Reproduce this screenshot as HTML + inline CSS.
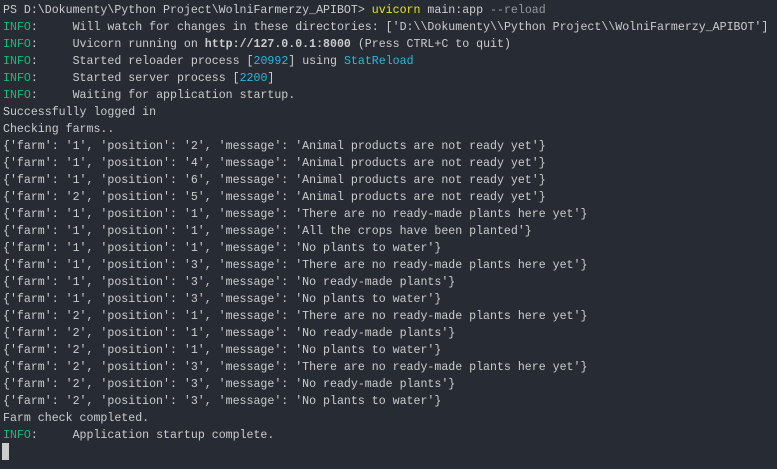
<!DOCTYPE html>
<html><head><meta charset="utf-8"><style>
html,body{margin:0;padding:0;background:#272b33;width:777px;height:469px;overflow:hidden}
pre{margin:0;padding:2px 0 0 3px;font-family:"Liberation Mono",monospace;font-size:11.6px;line-height:17px;color:#cccccc;white-space:pre}
.g{color:#0dbc79}.c{color:#29b8db}.y{color:#e5e510}.d{color:#999999}
.cur{position:absolute;left:2px;top:443px;width:7px;height:17px;background:#cccccc}
</style></head><body><pre>PS D:\Dokumenty\Python Project\WolniFarmerzy_APIBOT&gt; <span class="y">uvicorn</span> main:app <span class="d">--reload</span>
<span class="g">INFO</span>:     Will watch for changes in these directories: ['D:\\Dokumenty\\Python Project\\WolniFarmerzy_APIBOT']
<span class="g">INFO</span>:     Uvicorn running on <b>http://127.0.0.1:8000</b> (Press CTRL+C to quit)
<span class="g">INFO</span>:     Started reloader process [<span class="c">20992</span>] using <span class="c">StatReload</span>
<span class="g">INFO</span>:     Started server process [<span class="c">2200</span>]
<span class="g">INFO</span>:     Waiting for application startup.
Successfully logged in
Checking farms..
{'farm': '1', 'position': '2', 'message': 'Animal products are not ready yet'}
{'farm': '1', 'position': '4', 'message': 'Animal products are not ready yet'}
{'farm': '1', 'position': '6', 'message': 'Animal products are not ready yet'}
{'farm': '2', 'position': '5', 'message': 'Animal products are not ready yet'}
{'farm': '1', 'position': '1', 'message': 'There are no ready-made plants here yet'}
{'farm': '1', 'position': '1', 'message': 'All the crops have been planted'}
{'farm': '1', 'position': '1', 'message': 'No plants to water'}
{'farm': '1', 'position': '3', 'message': 'There are no ready-made plants here yet'}
{'farm': '1', 'position': '3', 'message': 'No ready-made plants'}
{'farm': '1', 'position': '3', 'message': 'No plants to water'}
{'farm': '2', 'position': '1', 'message': 'There are no ready-made plants here yet'}
{'farm': '2', 'position': '1', 'message': 'No ready-made plants'}
{'farm': '2', 'position': '1', 'message': 'No plants to water'}
{'farm': '2', 'position': '3', 'message': 'There are no ready-made plants here yet'}
{'farm': '2', 'position': '3', 'message': 'No ready-made plants'}
{'farm': '2', 'position': '3', 'message': 'No plants to water'}
Farm check completed.
<span class="g">INFO</span>:     Application startup complete.
</pre><div class="cur"></div></body></html>
